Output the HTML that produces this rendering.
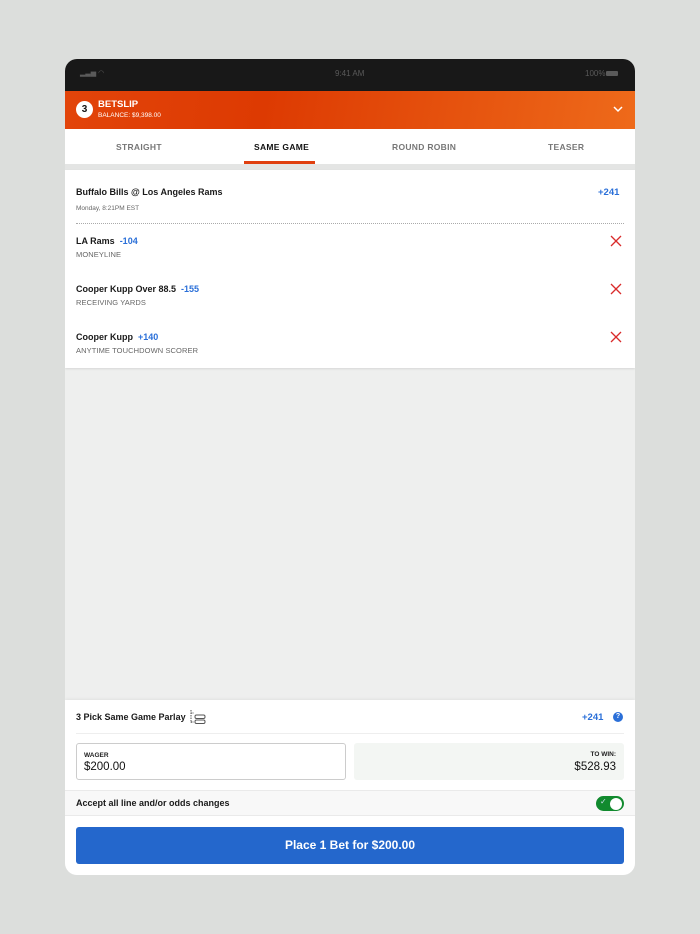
<!DOCTYPE html>
<html><head><style>
*{margin:0;padding:0;box-sizing:border-box}
body{width:700px;height:934px;background:#dcdedc;font-family:"Liberation Sans",sans-serif;position:relative;overflow:hidden}
.dev{position:absolute;left:65px;top:59px;width:570px;height:816px;border-radius:12px;overflow:hidden;background:#eeefee}
.abs{position:absolute}
.status{left:0;top:0;width:570px;height:33px;background:#181818;color:#5a5a5a;font-size:8px}
.hdr{left:0;top:32px;width:570px;height:38px;background:linear-gradient(100deg,#e2440a 0%,#dd3a02 35%,#ee6a1a 100%)}
.tabs{left:0;top:70px;width:570px;height:35px;background:#fff;font-size:8.5px;font-weight:bold;color:#777;letter-spacing:.3px}
.tabs span{position:absolute;top:13px}
.card{left:0;top:111px;width:570px;height:198px;background:#fff;box-shadow:0 1px 2px rgba(0,0,0,.1)}
.t{font-size:9px;font-weight:bold;color:#1a1a1a}
.b{color:#2a6fd8;font-weight:bold}
.s{font-size:7.5px;color:#666;letter-spacing:.1px}
.x{width:12px;height:12px}
.bot{left:0;top:641px;width:570px;height:175px;background:#fff;box-shadow:0 -1px 3px rgba(0,0,0,.06)}
</style></head><body>
<div class="dev">
 <div class="abs status">
  <span class="abs" style="left:15px;top:10px;font-size:7px">▂▃▅ ◠</span>
  <span class="abs" style="left:270px;top:10px">9:41 AM</span>
  <span class="abs" style="left:520px;top:10px">100%</span>
  <span class="abs" style="left:541px;top:12px;width:12px;height:5px;background:#5a5a5a;border-radius:1px"></span>
 </div>
 <div class="abs hdr">
  <div class="abs" style="left:11px;top:10px;width:17px;height:17px;border-radius:50%;background:#fff;color:#111;font-size:10px;font-weight:bold;text-align:center;line-height:17px">3</div>
  <div class="abs" style="left:33px;top:8px;color:#fff;font-size:9.5px;font-weight:bold">BETSLIP</div>
  <div class="abs" style="left:33px;top:21px;color:#fff;font-size:6.5px">BALANCE: $9,398.00</div>
  <svg class="abs" style="left:548px;top:14px" width="10" height="8" viewBox="0 0 10 8"><path d="M1 2l4 4 4-4" stroke="#fff" stroke-width="1.5" fill="none"/></svg>
 </div>
 <div class="abs tabs">
  <span style="left:51px">STRAIGHT</span>
  <span style="left:189px;color:#111">SAME GAME</span>
  <span style="left:327px">ROUND ROBIN</span>
  <span style="left:483px">TEASER</span>
  <div class="abs" style="left:179px;top:32px;width:71px;height:3px;background:#e04010"></div>
 </div>
 <div class="abs" style="left:0;top:105px;width:570px;height:6px;background:#e4e5e4"></div>
 <div class="abs card">
  <div class="abs t" style="left:11px;top:17px">Buffalo Bills @ Los Angeles Rams</div>
  <div class="abs b" style="left:533px;top:17px;font-size:9.5px">+241</div>
  <div class="abs" style="left:11px;top:35px;font-size:6.5px;color:#666">Monday, 8:21PM EST</div>
  <div class="abs" style="left:11px;top:53px;width:548px;border-top:1px dotted #aaa"></div>
  <div class="abs t" style="left:11px;top:66px">LA Rams &nbsp;<span class="b">-104</span></div>
  <div class="abs s" style="left:11px;top:80px">MONEYLINE</div>
  <div class="abs t" style="left:11px;top:114px">Cooper Kupp Over 88.5 &nbsp;<span class="b">-155</span></div>
  <div class="abs s" style="left:11px;top:128px">RECEIVING YARDS</div>
  <div class="abs t" style="left:11px;top:162px">Cooper Kupp &nbsp;<span class="b">+140</span></div>
  <div class="abs s" style="left:11px;top:176px">ANYTIME TOUCHDOWN SCORER</div>
  <svg class="abs x" style="left:545px;top:65px" viewBox="0 0 12 12"><path d="M1 1l10 10M11 1L1 11" stroke="#d92b2b" stroke-width="1.3"/></svg>
  <svg class="abs x" style="left:545px;top:113px" viewBox="0 0 12 12"><path d="M1 1l10 10M11 1L1 11" stroke="#d92b2b" stroke-width="1.3"/></svg>
  <svg class="abs x" style="left:545px;top:161px" viewBox="0 0 12 12"><path d="M1 1l10 10M11 1L1 11" stroke="#d92b2b" stroke-width="1.3"/></svg>
 </div>
 <div class="abs bot">
  <div class="abs t" style="left:11px;top:12px;font-size:9px">3 Pick Same Game Parlay</div>
  <svg class="abs" style="left:124px;top:9px" width="18" height="16" viewBox="0 0 18 16"><path d="M2 1v13M2 4h3M2 13h3" stroke="#555" stroke-width="1" stroke-dasharray="1.5 1" fill="none"/><rect x="6" y="6" width="10" height="3.5" rx="1.5" stroke="#555" fill="none"/><rect x="6" y="11" width="10" height="3.5" rx="1.5" stroke="#555" fill="none"/></svg>
  <div class="abs b" style="left:517px;top:12px;font-size:9.5px">+241</div>
  <div class="abs" style="left:548px;top:12px;width:10px;height:10px;border-radius:50%;background:#2a6fd8;color:#fff;font-size:7px;font-weight:bold;text-align:center;line-height:10px">?</div>
  <div class="abs" style="left:11px;top:33px;width:548px;border-top:1px solid #eee"></div>
  <div class="abs" style="left:11px;top:43px;width:270px;height:37px;border:1px solid #ccc;border-radius:3px">
   <div class="abs" style="left:7px;top:8px;font-size:6.5px;font-weight:bold;color:#222">WAGER</div>
   <div class="abs" style="left:7px;top:17px;font-size:11.5px;color:#111">$200.00</div>
  </div>
  <div class="abs" style="left:289px;top:43px;width:270px;height:37px;background:#f3f6f3;border-radius:3px">
   <div class="abs" style="right:8px;top:8px;font-size:6.5px;font-weight:bold;color:#222">TO WIN:</div>
   <div class="abs" style="right:8px;top:18px;font-size:11.5px;color:#111">$528.93</div>
  </div>
  <div class="abs" style="left:0;top:90px;width:570px;height:26px;background:#f8f8f8;border-top:1px solid #eaeaea;border-bottom:1px solid #eaeaea">
   <div class="abs t" style="left:11px;top:7px;font-size:9px">Accept all line and/or odds changes</div>
   <div class="abs" style="left:531px;top:5px;width:28px;height:15px;border-radius:8px;background:#118a2e">
    <span class="abs" style="left:4px;top:1px;color:#cde;font-size:8px">✓</span>
    <div class="abs" style="left:14px;top:1.5px;width:12px;height:12px;border-radius:50%;background:#fff"></div>
   </div>
  </div>
  <div class="abs" style="left:11px;top:127px;width:548px;height:37px;background:#2467cc;border-radius:3px;color:#fff;font-size:12px;font-weight:bold;text-align:center;line-height:37px">Place 1 Bet for $200.00</div>
 </div>
</div>
</body></html>
